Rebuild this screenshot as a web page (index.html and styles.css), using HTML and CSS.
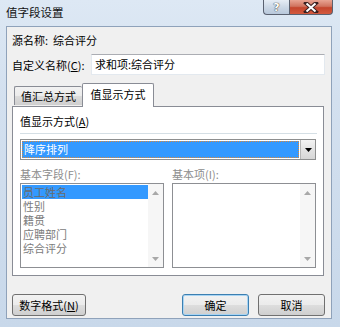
FILE: index.html
```html
<!DOCTYPE html>
<html>
<head>
<meta charset="utf-8">
<link rel="stylesheet" href="styles.css">
</head>
<body>
<div class="window">
  <div class="titlebar">
    <span class="title">值字段设置</span>
    <div class="caption-btns">
      <div class="cap help">?</div>
      <div class="cap close">
        <svg width="16" height="11" viewBox="0 0 16 11"><path d="M3 1 L13 10 M13 1 L3 10" stroke="#3b2020" stroke-width="4" stroke-linecap="square"/><path d="M3.5 1.5 L12.5 9.5 M12.5 1.5 L3.5 9.5" stroke="#fff" stroke-width="2"/></svg>
      </div>
    </div>
  </div>
  <div class="client">
    <div class="row src">源名称:&nbsp; 综合评分</div>
    <div class="row custom">
      <span class="lbl">自定义名称(<u>C</u>):</span>
      <div class="textbox">求和项:综合评分</div>
    </div>
    <div class="tabs">
      <div class="tab inactive">值汇总方式</div>
      <div class="tab active">值显示方式</div>
    </div>
    <div class="panel">
      <div class="plabel">值显示方式(<u>A</u>)</div>
      <div class="sep"></div>
      <div class="combo">
        <div class="combo-val"><span>降序排列</span></div>
        <div class="combo-btn"><svg width="7" height="4" viewBox="0 0 7 4"><path d="M0 0 H7 L3.5 4 Z" fill="#000"/></svg></div>
      </div>
      <div class="lists">
        <div class="col">
          <div class="dlabel">基本字段(F):</div>
          <div class="listbox">
            <div class="items">
              <div class="item sel">员工姓名</div>
              <div class="item">性别</div>
              <div class="item">籍贯</div>
              <div class="item">应聘部门</div>
              <div class="item">综合评分</div>
            </div>
            <div class="sb">
              <svg width="7" height="4" viewBox="0 0 7 4"><path d="M0 4 H7 L3.5 0 Z" fill="#a8a8a8"/></svg>
              <svg width="7" height="4" viewBox="0 0 7 4"><path d="M0 0 H7 L3.5 4 Z" fill="#a8a8a8"/></svg>
            </div>
          </div>
        </div>
        <div class="col">
          <div class="dlabel">基本项(I):</div>
          <div class="listbox">
            <div class="items"></div>
            <div class="sb">
              <svg width="7" height="4" viewBox="0 0 7 4"><path d="M0 4 H7 L3.5 0 Z" fill="#a8a8a8"/></svg>
              <svg width="7" height="4" viewBox="0 0 7 4"><path d="M0 0 H7 L3.5 4 Z" fill="#a8a8a8"/></svg>
            </div>
          </div>
        </div>
      </div>
    </div>
    <div class="buttons">
      <div class="btn numfmt">数字格式(<u>N</u>)</div>
      <div class="spacer"></div>
      <div class="btn ok">确定</div>
      <div class="btn cancel">取消</div>
    </div>
  </div>
</div>
</body>
</html>
```
FILE: styles.css
```css
html, body {
  margin: 0;
  padding: 0;
  width: 340px;
  height: 327px;
  overflow: hidden;
  font-family: "Noto Sans CJK SC", "Liberation Sans", sans-serif;
  font-size: 11px;
  color: #000;
}
u { text-decoration: underline; text-underline-offset: 1px; }
.window {
  width: 340px;
  height: 327px;
  box-sizing: border-box;
  background: linear-gradient(180deg, #dde8f4 0%, #d3e0ef 30%, #c8d8ea 100%);
  display: flex;
  flex-direction: column;
  padding: 0 8px 8px 6px;
}
.titlebar {
  height: 26px;
  display: flex;
  align-items: flex-start;
  position: relative;
}
.title {
  margin-top: 4px;
  font-size: 11.5px;
  line-height: 16px;
  color: #111;
}
.caption-btns {
  position: absolute;
  right: -1px;
  top: 0;
  display: flex;
}
.cap {
  height: 15px;
  box-sizing: border-box;
  border: 1px solid #5a6170;
  border-top: none;
  display: flex;
  align-items: center;
  justify-content: center;
}
.help {
  width: 26px;
  border-right: none;
  border-radius: 0 0 0 4px;
  background: linear-gradient(180deg, #e6edf5 0%, #ccd8e6 50%, #b8c8db 100%);
  color: #fff;
  font-family: "DejaVu Sans", sans-serif;
  font-weight: bold;
  font-size: 11px;
  line-height: 13px;
  text-shadow: 0 0 1px #333, 0 0 1px #333;
}
.close {
  width: 44px;
  border-radius: 0 0 4px 0;
  background: linear-gradient(180deg, #e8a493 0%, #d0735f 45%, #c4452d 55%, #d35a3f 100%);
}
.client {
  flex: 1;
  background: #f0f0f0;
  border: 1px solid #8fa2ba;
  display: flex;
  flex-direction: column;
  padding: 0 6px 0 5px;
}
.row { display: flex; align-items: center; white-space: nowrap; }
.src {
  margin-top: 5px;
  line-height: 16px;
  height: 16px;
}
.custom {
  margin-top: 6px;
  height: 21px;
}
.custom .lbl { width: 79px; flex-shrink: 0; }
.textbox {
  flex: 1;
  height: 21px;
  box-sizing: border-box;
  background: #fff;
  border: 1px solid #e3e9ef;
  border-top-color: #abadb3;
  padding: 0 3px;
  line-height: 19px;
}
.tabs {
  margin-top: 8px;
  height: 23px;
  display: flex;
  align-items: flex-end;
  padding-left: 2px;
  position: relative;
  z-index: 1;
  white-space: nowrap;
}
.tab {
  box-sizing: border-box;
  border: 1px solid #898c95;
  border-bottom: none;
  text-align: center;
  border-radius: 2px 2px 0 0;
}
.tab.inactive {
  width: 68px;
  height: 19px;
  line-height: 18px;
  background: linear-gradient(180deg, #f2f2f2 0%, #ebebeb 50%, #dcdcdc 51%, #cfcfcf 100%);
  border-right: none;
  margin-bottom: 1px;
}
.tab.active {
  width: 72px;
  height: 24px;
  line-height: 20px;
  background: #fff;
  margin-bottom: -1px;
}
.panel {
  width: 312px;
  height: 170px;
  box-sizing: border-box;
  background: #fff;
  border: 1px solid #898c95;
  padding: 7px 7px 0 7px;
  display: flex;
  flex-direction: column;
}
.plabel { line-height: 14px; height: 14px; }
.sep {
  margin-top: 5px;
  height: 1px;
  width: 297px;
  background: #d5dfe5;
}
.combo {
  margin-top: 5px;
  width: 296px;
  height: 21px;
  box-sizing: border-box;
  border: 1px solid #8e8f8f;
  display: flex;
  background: #fff;
}
.combo-val {
  flex: 1;
  padding: 1px;
}
.combo-val span {
  display: block;
  height: 17px;
  box-sizing: border-box;
  background: #3399ff;
  color: #fff;
  outline: 1px dotted #d9883a;
  outline-offset: -1px;
  line-height: 16px;
  padding-left: 2px;
}
.combo-btn {
  width: 14px;
  border-left: 1px solid #b5b5b5;
  background: linear-gradient(180deg, #f3f3f3 0%, #e3e3e3 50%, #d6d6d6 100%);
  display: flex;
  align-items: center;
  justify-content: center;
}
.lists {
  margin-top: 7px;
  display: flex;
  gap: 8px;
}
.col { display: flex; flex-direction: column; width: 145px; }
.dlabel { color: #8d8d8d; line-height: 14px; height: 14px; }
.listbox {
  margin-top: 2px;
  height: 85px;
  box-sizing: border-box;
  border: 1px solid #8d8f93;
  background: #fff;
  display: flex;
}
.items { flex: 1; padding: 1px 0 0 1px; }
.item {
  height: 14px;
  line-height: 14px;
  color: #7b7b7b;
  padding-left: 1px;
}
.item.sel { background: #3399ff; color: #6b6b6b; }
.sb {
  width: 15px;
  background: #f6f6f6;
  display: flex;
  flex-direction: column;
  justify-content: space-between;
  align-items: center;
  padding: 7px 0 6px;
  box-sizing: border-box;
}
.buttons {
  margin-top: 18px;
  display: flex;
  gap: 9px;
}
.spacer { flex: 1; }
.btn {
  height: 22px;
  box-sizing: border-box;
  border: 1px solid #707070;
  border-radius: 3px;
  background: linear-gradient(180deg, #f2f2f2 0%, #ebebeb 50%, #dddddd 51%, #cfcfcf 100%);
  text-align: center;
  line-height: 20px;
  white-space: nowrap;
}
.numfmt { width: 74px; }
.ok {
  width: 67px;
  border-color: #3c7fb1;
  box-shadow: inset 0 0 0 1px #a8d4f3;
}
.cancel { width: 67px; }
```
